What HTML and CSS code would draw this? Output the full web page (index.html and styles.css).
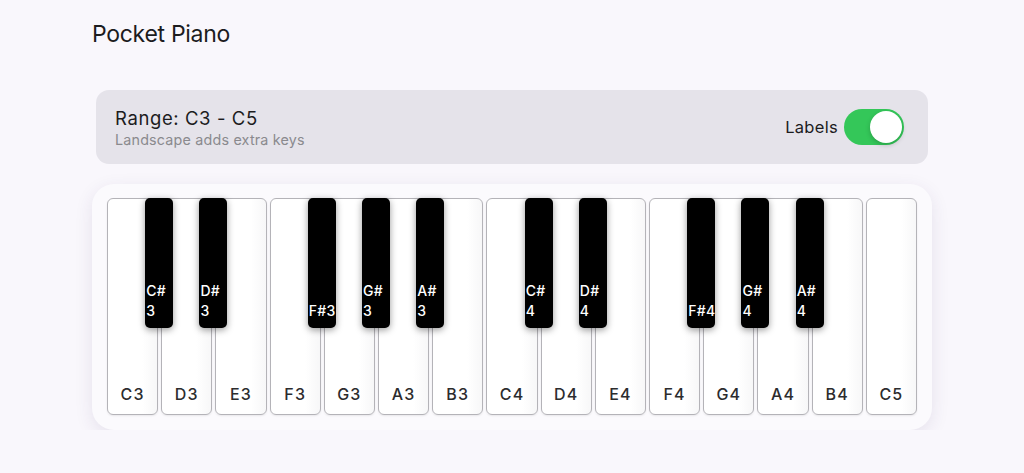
FILE: index.html
```html
<!DOCTYPE html>
<html lang="en">
<head>
    <meta charset="UTF-8">
    <meta name="viewport" content="width=device-width, initial-scale=1.0">
    <title>Pocket Piano</title>
    <link rel="stylesheet" href="styles.css">
</head>
<body>
    <div class="app">
        <h1 class="app-title">Pocket Piano</h1>

        <div class="range-card">
            <div class="range-info">
                <div class="range-title">Range: C3 - C5</div>
                <div class="range-hint">Landscape adds extra keys</div>
            </div>
            <label class="labels-toggle">
                <span class="toggle-text">Labels</span>
                <span class="switch on"><span class="knob"></span></span>
            </label>
        </div>

        <div class="piano">
            <div class="white-keys">
                <div class="white-key"><span class="key-label">C3</span>
                    <div class="black-key"><span class="black-label">C#<br>3</span></div></div>
                <div class="white-key"><span class="key-label">D3</span>
                    <div class="black-key"><span class="black-label">D#<br>3</span></div></div>
                <div class="white-key"><span class="key-label">E3</span></div>
                <div class="white-key"><span class="key-label">F3</span>
                    <div class="black-key"><span class="black-label">F#3</span></div></div>
                <div class="white-key"><span class="key-label">G3</span>
                    <div class="black-key"><span class="black-label">G#<br>3</span></div></div>
                <div class="white-key"><span class="key-label">A3</span>
                    <div class="black-key"><span class="black-label">A#<br>3</span></div></div>
                <div class="white-key"><span class="key-label">B3</span></div>
                <div class="white-key"><span class="key-label">C4</span>
                    <div class="black-key"><span class="black-label">C#<br>4</span></div></div>
                <div class="white-key"><span class="key-label">D4</span>
                    <div class="black-key"><span class="black-label">D#<br>4</span></div></div>
                <div class="white-key"><span class="key-label">E4</span></div>
                <div class="white-key"><span class="key-label">F4</span>
                    <div class="black-key"><span class="black-label">F#4</span></div></div>
                <div class="white-key"><span class="key-label">G4</span>
                    <div class="black-key"><span class="black-label">G#<br>4</span></div></div>
                <div class="white-key"><span class="key-label">A4</span>
                    <div class="black-key"><span class="black-label">A#<br>4</span></div></div>
                <div class="white-key"><span class="key-label">B4</span></div>
                <div class="white-key"><span class="key-label">C5</span></div>
            </div>
        </div>
    </div>
</body>
</html>
```

FILE: styles.css
```css
:root {
    --page-bg: #f9f7fc;
    --card-bg: #e5e3ea;
    --text-color: #1c1c1e;
    --muted-color: #8a8a8e;
    --switch-on: #34c759;
    --key-border: #b4b3b8;
}

* {
    box-sizing: border-box;
}

body {
    margin: 0;
    font-family: 'Inter', 'Noto Sans', sans-serif;
    background-color: var(--page-bg);
    color: var(--text-color);
}

.app {
    width: 840px;
    margin: 0 auto;
    padding-top: 17px;
}

.app-title {
    margin: 0;
    font-size: 23px;
    font-weight: 400;
    line-height: 34px;
    letter-spacing: -0.3px;
}

.range-card {
    margin: 39px 4px 0;
    height: 74px;
    background-color: var(--card-bg);
    border-radius: 13px;
    padding: 0 24px 0 19px;
    display: flex;
    align-items: center;
    justify-content: space-between;
}

.range-title {
    font-size: 18.5px;
    line-height: 24px;
    letter-spacing: 0.6px;
}

.range-hint {
    margin-top: 1px;
    font-size: 14.3px;
    line-height: 18px;
    color: var(--muted-color);
    letter-spacing: 0.2px;
}

.labels-toggle {
    display: flex;
    align-items: center;
    gap: 6px;
}

.toggle-text {
    font-size: 16.5px;
    letter-spacing: 0.3px;
}

.switch {
    width: 60px;
    height: 36px;
    border-radius: 18px;
    background-color: #d1d1d6;
    padding: 2px;
    display: flex;
}

.switch.on {
    background-color: var(--switch-on);
    justify-content: flex-end;
}

.knob {
    width: 32px;
    height: 32px;
    border-radius: 50%;
    background-color: #fff;
    box-shadow: 0 2px 5px rgba(0, 0, 0, 0.2);
}

.piano {
    margin-top: 20px;
    padding: 14px 15px 15px;
    background-color: #fbfafd;
    border-radius: 22px;
    box-shadow: 0 5px 18px rgba(60, 40, 100, 0.1);
}

.white-keys {
    display: flex;
    gap: 3px;
    height: 217px;
}

.white-key {
    flex: 1;
    position: relative;
    background: linear-gradient(to right, #ffffff 70%, #f7f7f8);
    border: 1px solid var(--key-border);
    border-radius: 6px;
    box-shadow: 0 1px 2px rgba(0, 0, 0, 0.08);
    display: flex;
    align-items: flex-end;
    justify-content: center;
    padding-bottom: 10px;
}

.key-label {
    font-size: 16px;
    font-weight: 500;
    line-height: 20px;
    letter-spacing: 1.2px;
    color: #2c2c2e;
}

/* black key sits over the gap to the right of its white key */
.black-key {
    position: absolute;
    top: -1px;
    right: -16px;
    width: 28px;
    height: 130px;
    z-index: 2;
    background-color: #000;
    border-radius: 5px;
    box-shadow: 0 2px 7px rgba(0, 0, 0, 0.4);
    display: flex;
    align-items: flex-end;
    padding: 0 0 8px 1px;
}

.black-label {
    color: #fff;
    font-size: 14px;
    font-weight: 500;
    line-height: 19.5px;
    letter-spacing: 0.3px;
    white-space: nowrap;
}
```
